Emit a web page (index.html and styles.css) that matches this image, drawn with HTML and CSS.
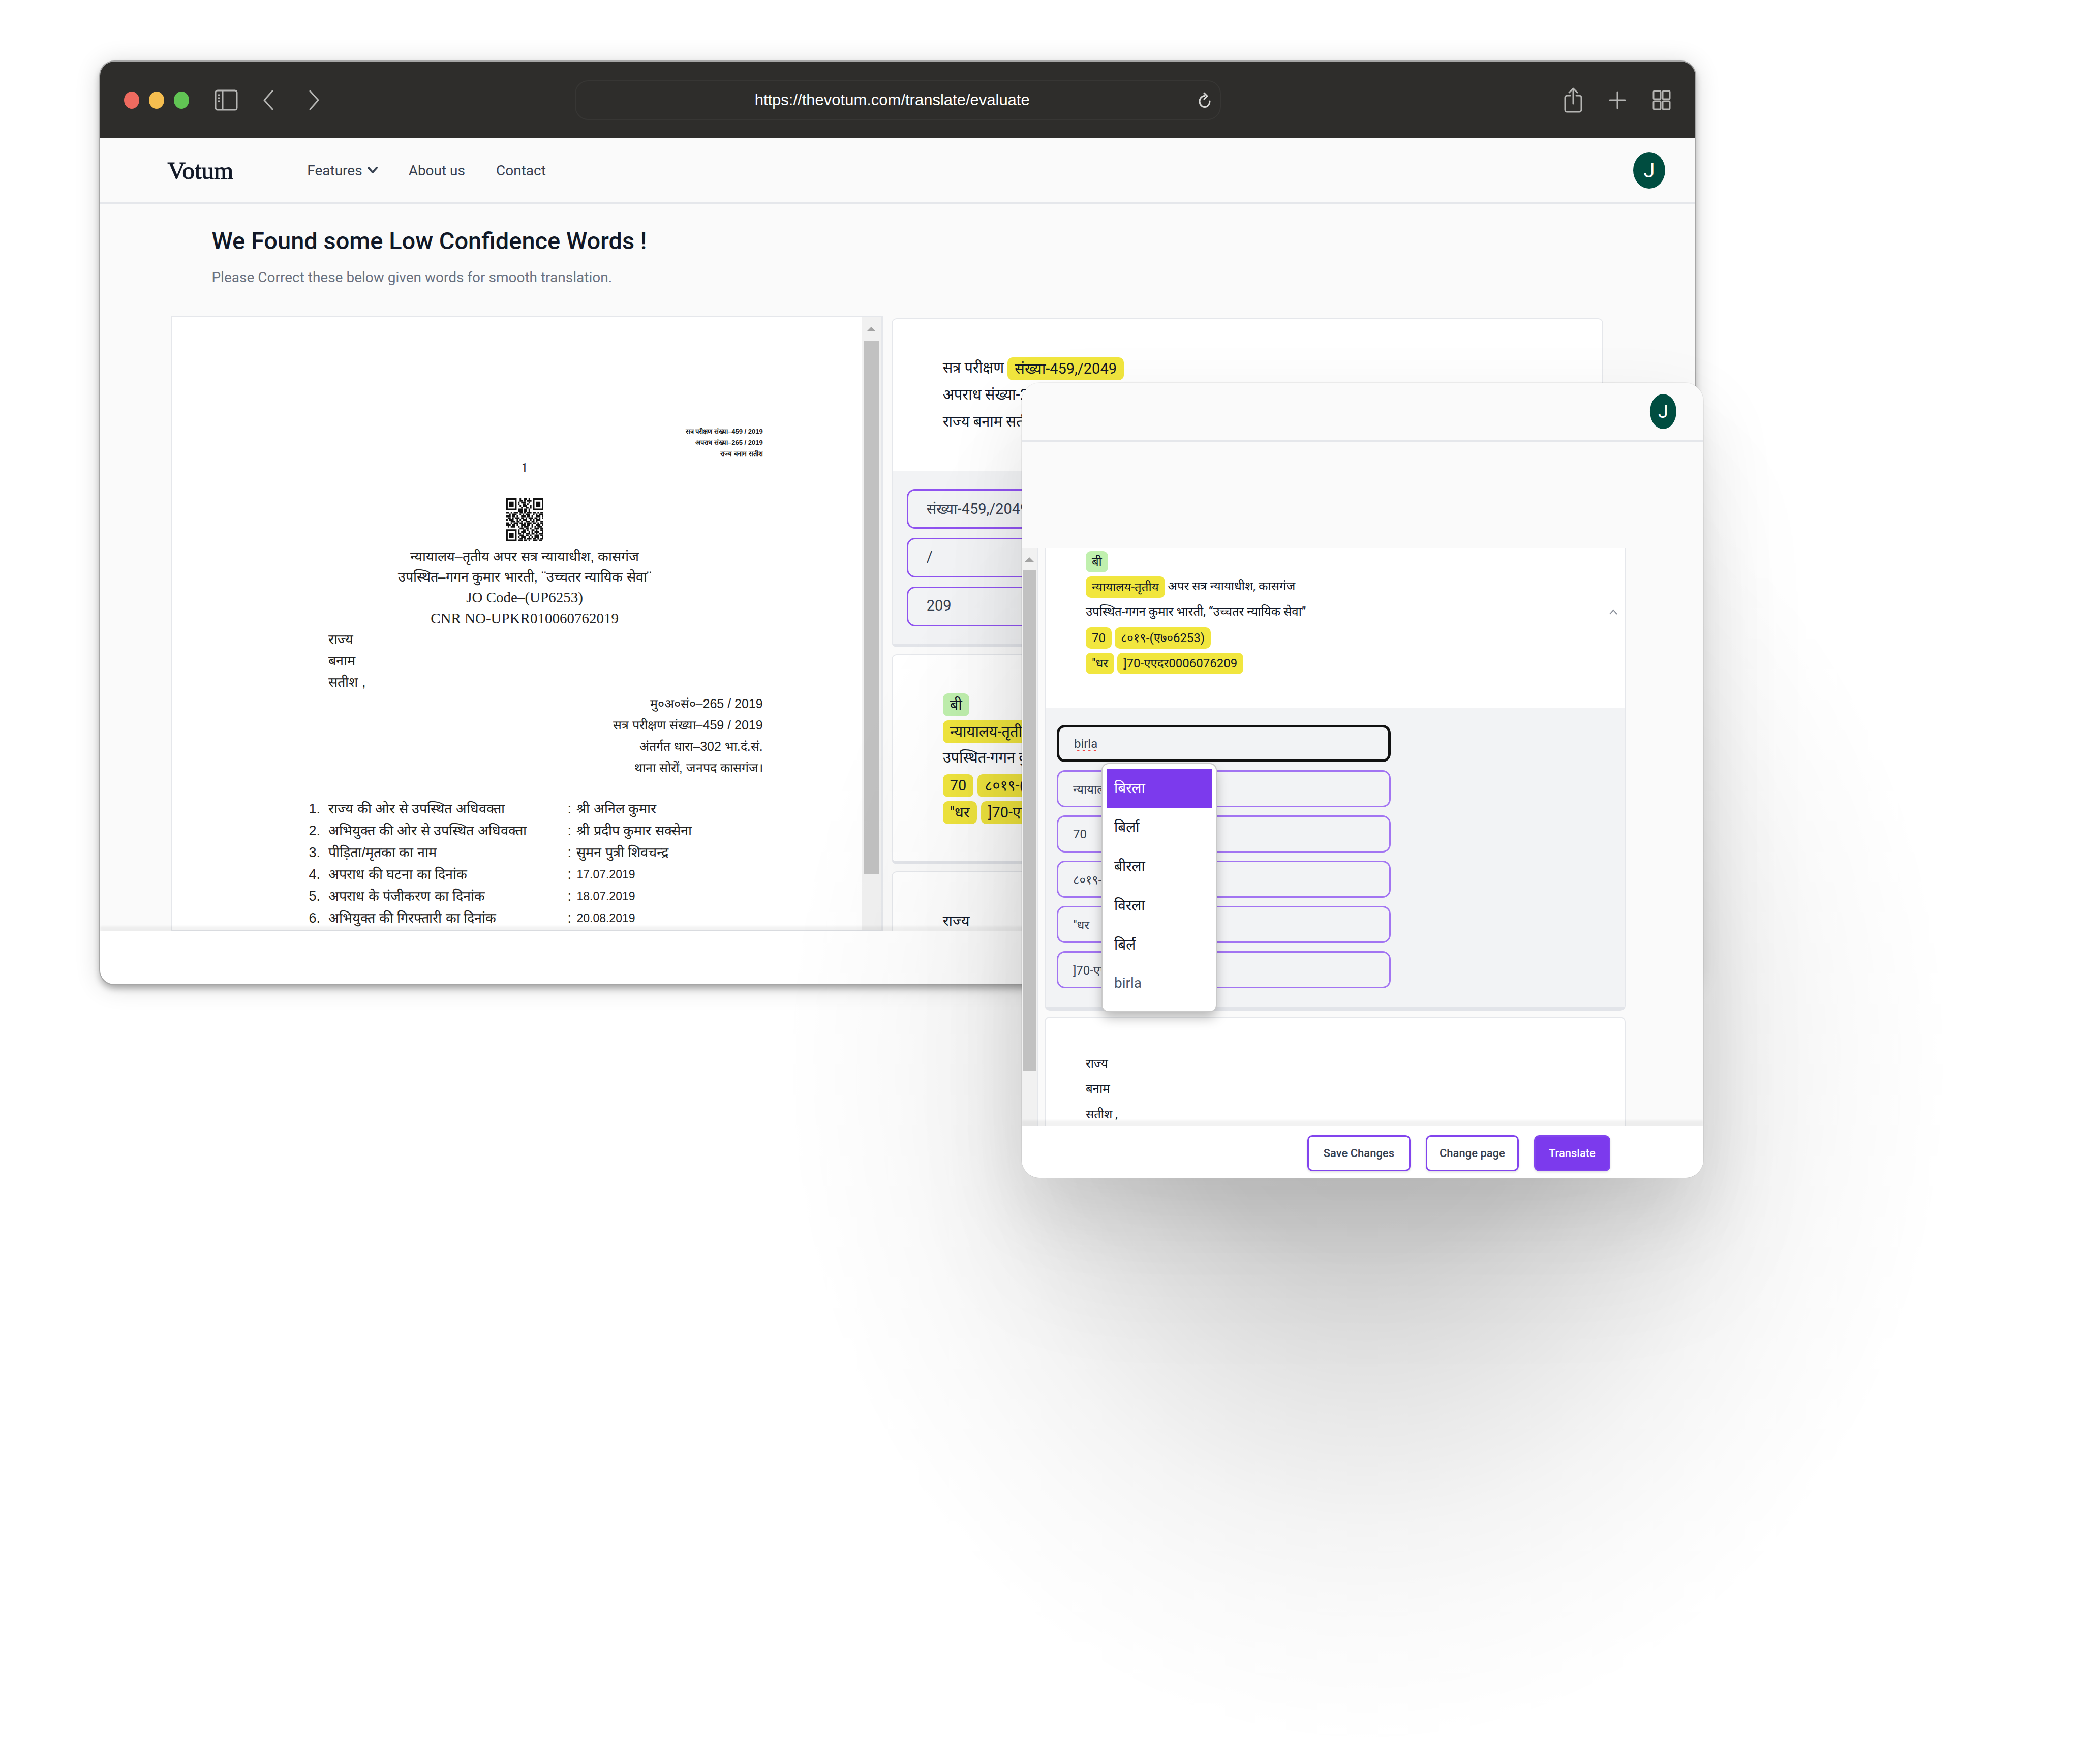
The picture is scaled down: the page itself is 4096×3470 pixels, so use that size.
FILE: index.html
```html
<!DOCTYPE html>
<html lang="en">
<head>
<meta charset="utf-8">
<meta name="viewport" content="width=device-width, initial-scale=1">
<title>Votum – Evaluate translation</title>
<link rel="stylesheet" href="styles.css">
</head>
<body>
<div class="stage">

  <section class="browser">
    <div class="toolbar">
      <div class="toolbar-left">
        <div class="lights"><span class="light red"></span><span class="light amber"></span><span class="light green"></span></div>
        <button class="tool" type="button" aria-label="Sidebar">
          <svg width="46" height="42" viewBox="0 0 46 42" fill="none" stroke="#b5b5b3" stroke-width="3"><rect x="2" y="2" width="42" height="38" rx="4"/><path d="M16 2v38M6 11h5M6 17h5M6 23h5"/></svg>
        </button>
        <button class="tool" type="button" aria-label="Back">
          <svg width="20" height="40" viewBox="0 0 20 40" fill="none" stroke="#b5b5b3" stroke-width="3" stroke-linecap="round" stroke-linejoin="round"><path d="M18 2L2 20l16 18"/></svg>
        </button>
        <button class="tool forward" type="button" aria-label="Forward">
          <svg width="20" height="40" viewBox="0 0 20 40" fill="none" stroke="#b5b5b3" stroke-width="3" stroke-linecap="round" stroke-linejoin="round"><path d="M2 2l16 18L2 38"/></svg>
        </button>
      </div>
      <div class="address">
        <input class="address-input" type="text" aria-label="Address" value="https://thevotum.com/translate/evaluate">
        <button class="tool" type="button" aria-label="Reload">
          <svg width="24" height="32" viewBox="0 0 24 32" fill="none" stroke="#d8d8d6" stroke-width="3" stroke-linecap="round" stroke-linejoin="round"><path d="M12 7.500A10 11 0 1 0 22 18M11 2l6 6-6 6"/></svg>
        </button>
      </div>
      <div class="toolbar-right">
        <button class="tool" type="button" aria-label="Share">
          <svg width="36" height="50" viewBox="0 0 36 50" fill="none" stroke="#b5b5b3" stroke-width="3" stroke-linecap="round" stroke-linejoin="round"><path d="M12 16H6a4 4 0 0 0-4 4v24a4 4 0 0 0 4 4h24a4 4 0 0 0 4-4V20a4 4 0 0 0-4-4h-6M18 32V2M10 10l8-8 8 8"/></svg>
        </button>
        <button class="tool" type="button" aria-label="New tab">
          <svg width="34" height="36" viewBox="0 0 34 36" fill="none" stroke="#b5b5b3" stroke-width="3" stroke-linecap="round"><path d="M17 2v32M2 18h30"/></svg>
        </button>
        <button class="tool" type="button" aria-label="Tab overview">
          <svg width="36" height="40" viewBox="0 0 36 40" fill="none" stroke="#b5b5b3" stroke-width="3"><rect x="2" y="2" width="14" height="16" rx="2"/><rect x="20" y="2" width="14" height="16" rx="2"/><rect x="2" y="22" width="14" height="16" rx="2"/><rect x="20" y="22" width="14" height="16" rx="2"/></svg>
        </button>
      </div>
    </div>

    <header class="site-nav">
      <a class="brand" href="#">Votum</a>
      <nav class="links">
        <a href="#">Features <svg width="20" height="14" viewBox="0 0 20 14" fill="none" stroke="#374151" stroke-width="4" stroke-linecap="round" stroke-linejoin="round"><path d="M2 2l8 9 8-9"/></svg></a>
        <a href="#">About us</a>
        <a href="#">Contact</a>
      </nav>
      <button class="avatar" type="button" aria-label="Account">J</button>
    </header>

    <main class="content">
      <div class="intro">
        <h1>We Found some Low Confidence Words !</h1>
        <p>Please Correct these below given words for smooth translation.</p>
      </div>
      <div class="panes">
        <article class="document" lang="hi">
          <div class="sheet">
            <p class="stamp">सत्र परीक्षण संख्या–459 / 2019<br>अपराध संख्या–265 / 2019<br>राज्य बनाम सतीश</p>
            <p class="folio">1</p>
            <svg class="qr" viewBox="0 0 25 25" preserveAspectRatio="none" aria-label="QR code">
              <g fill="none" stroke="#111"><path d="M.5.500h6v6h-6zM18.500.500h6v6h-6zM.5 18.500h6v6h-6z"/>
              <path stroke-dasharray="1 2 2 1" d="M9 .5h8M8 3.500h9M10 5.500h7M8 18.500h17"/>
              <path stroke-dasharray="2 1 1 1 3 1" d="M9 1.500h8M0 8.500h25M1 11.500h24M0 14.500h25M8 20.500h17M9 23.500h16"/>
              <path stroke-dasharray="1 1 3 2 1 1" d="M8 2.500h8M9 4.500h8M2 9.500h23M0 12.500h25M1 16.500h24M8 19.500h17M8 22.500h17"/>
              <path stroke-dasharray="3 1 2 1 1 2" d="M8 6.500h9M8 7.500h9M0 10.500h25M3 13.500h22M0 15.500h25M9 17.500h16M9 21.500h16M8 24.500h17"/></g>
              <path fill="#111" d="M2 2h3v3H2zM20 2h3v3h-3zM2 20h3v3H2z"/>
            </svg>
            <p class="court">न्यायालय–तृतीय अपर सत्र न्यायाधीश, कासगंज<br>उपस्थित–गगन कुमार भारती, ¨उच्चतर न्यायिक सेवा¨<br><span class="latin">JO Code–(UP6253)</span><br><span class="latin">CNR NO-UPKR010060762019</span></p>
            <p class="parties">राज्य<br>बनाम<br>सतीश ,</p>
            <p class="case">मु०अ०सं०–265 / 2019<br>सत्र परीक्षण संख्या–459 / 2019<br>अंतर्गत धारा–302 भा.दं.सं.<br>थाना सोरों, जनपद कासगंज।</p>
            <table class="facts">
              <tr><td class="num">1.</td><td class="fact">राज्य की ओर से उपस्थित अधिवक्ता</td><td class="colon">:</td><td>श्री अनिल कुमार</td></tr>
              <tr><td class="num">2.</td><td class="fact">अभियुक्त की ओर से उपस्थित अधिवक्ता</td><td class="colon">:</td><td>श्री प्रदीप कुमार सक्सेना</td></tr>
              <tr><td class="num">3.</td><td class="fact">पीड़िता/मृतका का नाम</td><td class="colon">:</td><td>सुमन पुत्री शिवचन्द्र</td></tr>
              <tr><td class="num">4.</td><td class="fact">अपराध की घटना का दिनांक</td><td class="colon">:</td><td class="date">17.07.2019</td></tr>
              <tr><td class="num">5.</td><td class="fact">अपराध के पंजीकरण का दिनांक</td><td class="colon">:</td><td class="date">18.07.2019</td></tr>
              <tr><td class="num">6.</td><td class="fact">अभियुक्त की गिरफ्तारी का दिनांक</td><td class="colon">:</td><td class="date">20.08.2019</td></tr>
              <tr><td class="num"></td><td class="fact">आरोप विरचित होने का दिनांक</td><td class="colon"></td><td></td></tr>
            </table>
          </div>
          <div class="track"><span class="arrow"></span><span class="thumb"></span></div>
        </article>

        <div class="cards" lang="hi">
          <section class="card">
            <div class="lines">
              <p>सत्र परीक्षण <mark>संख्या-459,/2049</mark></p>
              <p>अपराध संख्या-265,/2019</p>
              <p>राज्य बनाम सतीश</p>
            </div>
            <div class="fixes">
              <input type="text" aria-label="Word 1" value="संख्या-459,/2049">
              <input type="text" aria-label="Word 2" value="/">
              <input type="text" aria-label="Word 3" value="209">
            </div>
          </section>
          <section class="card">
            <div class="lines">
              <p><mark class="done">बी</mark></p>
              <p><mark>न्यायालय-तृतीय</mark> अपर सत्र न्यायाधीश</p>
              <p>उपस्थित-गगन कुमार भारती</p>
              <p><mark>70</mark><mark>८०१९-(ए७०6253)</mark></p>
              <p><mark>"धर</mark><mark>]70-एएदर0006076209</mark></p>
            </div>
          </section>
          <section class="card">
            <div class="lines"><p>राज्य</p></div>
          </section>
        </div>
      </div>
    </main>
    <footer class="actions"></footer>
  </section>

  <section class="browser popup">
    <header class="site-nav">
      <button class="avatar" type="button" aria-label="Account">J</button>
    </header>
    <main class="content">
      <div class="panes">
        <div class="track"><span class="arrow"></span><span class="thumb"></span></div>
        <div class="cards" lang="hi">
          <section class="card open">
            <div class="lines with-toggle">
              <div>
                <p><mark class="done">बी</mark></p>
                <p><mark>न्यायालय-तृतीय</mark> अपर सत्र न्यायाधीश, कासगंज</p>
                <p>उपस्थित-गगन कुमार भारती, “उच्चतर न्यायिक सेवा”</p>
                <p><mark>70</mark><mark>८०१९-(ए७०6253)</mark></p>
                <p><mark>"धर</mark><mark>]70-एएदर0006076209</mark></p>
              </div>
              <button class="toggle" type="button" aria-label="Collapse">
                <svg width="16" height="12" viewBox="0 0 16 12" fill="none" stroke="#8a8f9a" stroke-width="2"><path d="M1 11l7-8 7 8"/></svg>
              </button>
            </div>
            <div class="fixes">
              <div class="combo">
                <input class="focused" type="text" aria-label="Word 1" value="birla">
                <ul class="suggestions">
                  <li><button class="selected" type="button">बिरला</button></li>
                  <li><button type="button">बिर्ला</button></li>
                  <li><button type="button">बीरला</button></li>
                  <li><button type="button">विरला</button></li>
                  <li><button type="button">बिर्ल</button></li>
                  <li><button class="plain" type="button">birla</button></li>
                </ul>
              </div>
              <input type="text" aria-label="Word 2" value="न्यायालय-तृतीय">
              <input type="text" aria-label="Word 3" value="70">
              <input type="text" aria-label="Word 4" value="८०१९-(ए७०6253)">
              <input type="text" aria-label="Word 5" value="&quot;धर">
              <input type="text" aria-label="Word 6" value="]70-एएदर0006076209">
            </div>
          </section>
          <section class="card">
            <div class="lines"><p>राज्य</p><p>बनाम</p><p>सतीश ,</p></div>
          </section>
        </div>
      </div>
    </main>
    <footer class="actions">
      <button class="btn wide" type="button">Save Changes</button>
      <button class="btn" type="button">Change page</button>
      <button class="btn primary" type="button">Translate</button>
    </footer>
  </section>

</div>
</body>
</html>
```
FILE: styles.css
```css
* { box-sizing: border-box; }
body { margin: 0; background: #fff; color: #111827; font-family: Roboto, "Noto Sans", sans-serif; font-size: 29px; }
p, h1, ul { margin: 0; padding: 0; }
button, input { font: inherit; color: inherit; margin: 0; }
button { background: none; border: 0; padding: 0; }
a { color: inherit; text-decoration: none; }
svg { display: block; }

.stage { position: relative; min-height: 100vh; overflow: hidden; padding-top: 121px; }

/* Wide soft shade cast by the front window */
.stage::after { content: ""; position: absolute; left: 37.6%; top: 740px; width: 56.2%; height: 2700px; pointer-events: none;
  background: radial-gradient(closest-side, rgba(0,0,0,.19) 0%, rgba(0,0,0,.165) 28%, rgba(0,0,0,.125) 40%, rgba(0,0,0,.082) 54%, rgba(0,0,0,.045) 68%, rgba(0,0,0,.02) 82%, rgba(0,0,0,.006) 93%, transparent 100%); }

/* Windows */
.browser { width: 76.6%; margin-left: 4.82%; border-radius: 28px; background: #fafafa; overflow: hidden; box-shadow: 0 0 0 2px #a6a6a6, 0 8px 14px rgba(0,0,0,.3), 0 4px 50px rgba(0,0,0,.16); }
.popup { position: absolute; z-index: 1; left: 49.07%; top: 753px; width: 32.74%; margin: 0; border-radius: 36px; font-size: 24px;
  box-shadow: 0 0 0 1px rgba(0,0,0,.06), 0 60px 150px rgba(0,0,0,.1), 0 180px 260px rgba(0,0,0,.06); }

/* Browser toolbar */
.toolbar { display: grid; grid-template-columns: 1fr 40.5% 1fr; align-items: center; height: 151px; background: #2e2d2b; }
.toolbar-left { display: flex; align-items: center; gap: 50px; padding-left: 47px; }
.lights { display: flex; gap: 19px; }
.light { width: 30px; height: 34px; border-radius: 50%; }
.red { background: #ee6a5f; }
.amber { background: #f5bd4f; }
.green { background: #61c454; }
.forward { margin-left: 20px; }
.address { display: flex; align-items: center; height: 78px; padding: 0 18px 0 20px; border: 2px solid #373634; border-radius: 26px; }
.address-input { flex: 1; min-width: 0; padding: 0; border: 0; background: none; color: #fff; text-align: center; font-family: "Liberation Sans", sans-serif; font-size: 31px; }
.toolbar-right { display: flex; align-items: center; justify-content: flex-end; gap: 52px; padding-right: 48px; }

/* Site navigation */
.site-nav { display: flex; align-items: center; height: 129px; padding: 0 59px 0 132px; border-bottom: 3px solid #e5e7eb; }
.brand { font-family: "Liberation Serif", serif; font-size: 49px; -webkit-text-stroke: 1px #111827; }
.links { display: flex; gap: 61px; margin-left: 145px; color: #374151; font-size: 28px; }
.links a { display: flex; align-items: center; gap: 10px; }
.avatar { width: 63px; height: 72px; margin-left: auto; border-radius: 50%; background: #004d40; color: #fff; font-size: 40px; }

/* Page */
.content { padding: 43px 181px 0 140px; }
.intro { padding: 0 0 56px 79px; }
h1 { font-size: 47px; line-height: 60px; font-weight: 500; }
.intro p { margin-top: 22px; color: #6b7280; font-size: 28px; line-height: 40px; }
.panes { display: grid; grid-template-columns: 1fr 1fr; gap: 16px; height: 1210px; overflow: hidden; }

/* Scanned document */
.document { display: grid; grid-template-columns: 1fr 41px; height: 1210px; overflow: hidden; border: 2px solid #e5e7eb; background: #fff; }
.sheet { padding: 214px 194px 0 224px; color: #222; font-family: "Liberation Sans", sans-serif; font-size: 27px; }
.stamp { text-align: right; font-size: 13px; line-height: 22px; font-weight: 700; }
.folio { text-align: center; font-family: "Liberation Serif", serif; line-height: 32px; }
.qr { width: 73px; height: 85px; margin: 44px auto 10px; }
.court { text-align: center; line-height: 40px; }
.latin { font-family: "Liberation Serif", serif; font-size: 29px; }
.parties { padding-left: 83px; line-height: 42px; }
.case { text-align: right; font-size: 25px; line-height: 42px; }
.facts { margin: 39px 0 0 44px; border-collapse: collapse; white-space: nowrap; }
.facts td { height: 43px; padding: 0; line-height: 43px; }
.facts .date { font-size: 23px; }
.num { width: 39px; }
.facts .fact { width: 470px; }
.facts .colon { width: 18px; }

/* Scroll bars */
.track { display: flex; flex-direction: column; align-items: center; background: #f1f1f1; border-right: 2px solid #e5e7eb; }
.arrow { margin: 19px 0; border: 9px solid transparent; border-top: 0; border-bottom: 9px solid #a3a3a3; }
.thumb { width: 31px; height: 1049px; background: #c1c1c1; }

/* Result cards */
.cards { padding-top: 4px; }
.card { margin-bottom: 14px; border: 2px solid #e5e7eb; border-bottom: 6px solid #e2e4e9; border-radius: 10px; background: #fff; }
.lines { padding: 69px 99px 71px; }
.lines p { height: 53px; line-height: 53px; white-space: nowrap; }
mark { display: inline-block; height: 45px; padding: 0 14px; border-radius: 10px; background: #f1e63e; color: inherit; line-height: 45px; vertical-align: middle; }
mark + mark { margin-left: 8px; }
.done { background: #c0f0ae; }
.fixes { display: flex; flex-direction: column; gap: 18px; padding: 35px 28px; background: #f2f3f5; }
.fixes input { width: 60%; height: 78px; padding: 0 36px 4px; border: 3px solid #8f52f0; border-radius: 16px; background: none; color: #374151; outline: 0; }

.actions { position: relative; display: flex; align-items: center; height: 104px; background: #fff; box-shadow: 0 -10px 4px rgba(0,0,0,.05); }

/* Front window */
.popup .site-nav { height: 116px; padding-right: 53px; }
.popup .avatar { width: 52px; height: 69px; font-size: 36px; }
.popup .content { padding: 209px 153px 0 0; }
.popup .panes { grid-template-columns: 33px 1fr; gap: 12px; height: 1136px; }
.popup .thumb { width: 26px; height: 986px; flex: none; }
.popup .arrow { margin: 18px 0 16px; }
.popup .cards { padding: 0; }
.popup .lines { padding: 65px 79px; }
.popup .lines p { height: 50px; line-height: 50px; }
.popup .card { margin-bottom: 12px; border-bottom-width: 7px; }
.popup .open { border-top: 0; border-radius: 0 0 10px 10px; }
.popup .with-toggle { display: flex; align-items: center; justify-content: space-between; padding: 0 14px 65px 79px; }
.popup mark { height: 42px; line-height: 42px; padding: 0 12px; }
.popup mark + mark { margin-left: 6px; }
.popup .fixes { gap: 16px; padding: 33px 22px 37px; }
.popup .fixes input { height: 73px; padding: 0 29px; border-color: #a274f2; }
.combo { position: relative; display: flex; }
.popup .fixes .focused { border: 5px solid #111; text-decoration: underline wavy #f04444 2px; text-underline-offset: 4px; }
.suggestions { position: absolute; z-index: 1; left: 90px; top: 77px; width: 223px; padding: 9px 8px 15px; border-radius: 12px; background: #fff; list-style: none; font-size: 28px; box-shadow: 0 0 0 2px #c9c9c9, 0 12px 24px rgba(0,0,0,.28); }
.suggestions button { display: block; width: 100%; height: 77px; padding: 0 15px 4px; text-align: left; }
.suggestions .selected { background: #7c3aed; color: #fff; }
.suggestions .plain { color: #4b5563; }

.popup .actions { justify-content: flex-end; gap: 30px; height: 103px; padding: 6px 183px 0 0; }
.btn { height: 71px; padding: 0 24px; border: 3px solid #8244ee; border-radius: 10px; background: #fff; color: #374151; font-size: 22px; font-weight: 500; box-shadow: 0 2px 4px rgba(0,0,0,.12); }
.wide { padding: 0 29px; }
.primary { padding: 0 26px; background: #7c3aed; color: #fff; }
```
